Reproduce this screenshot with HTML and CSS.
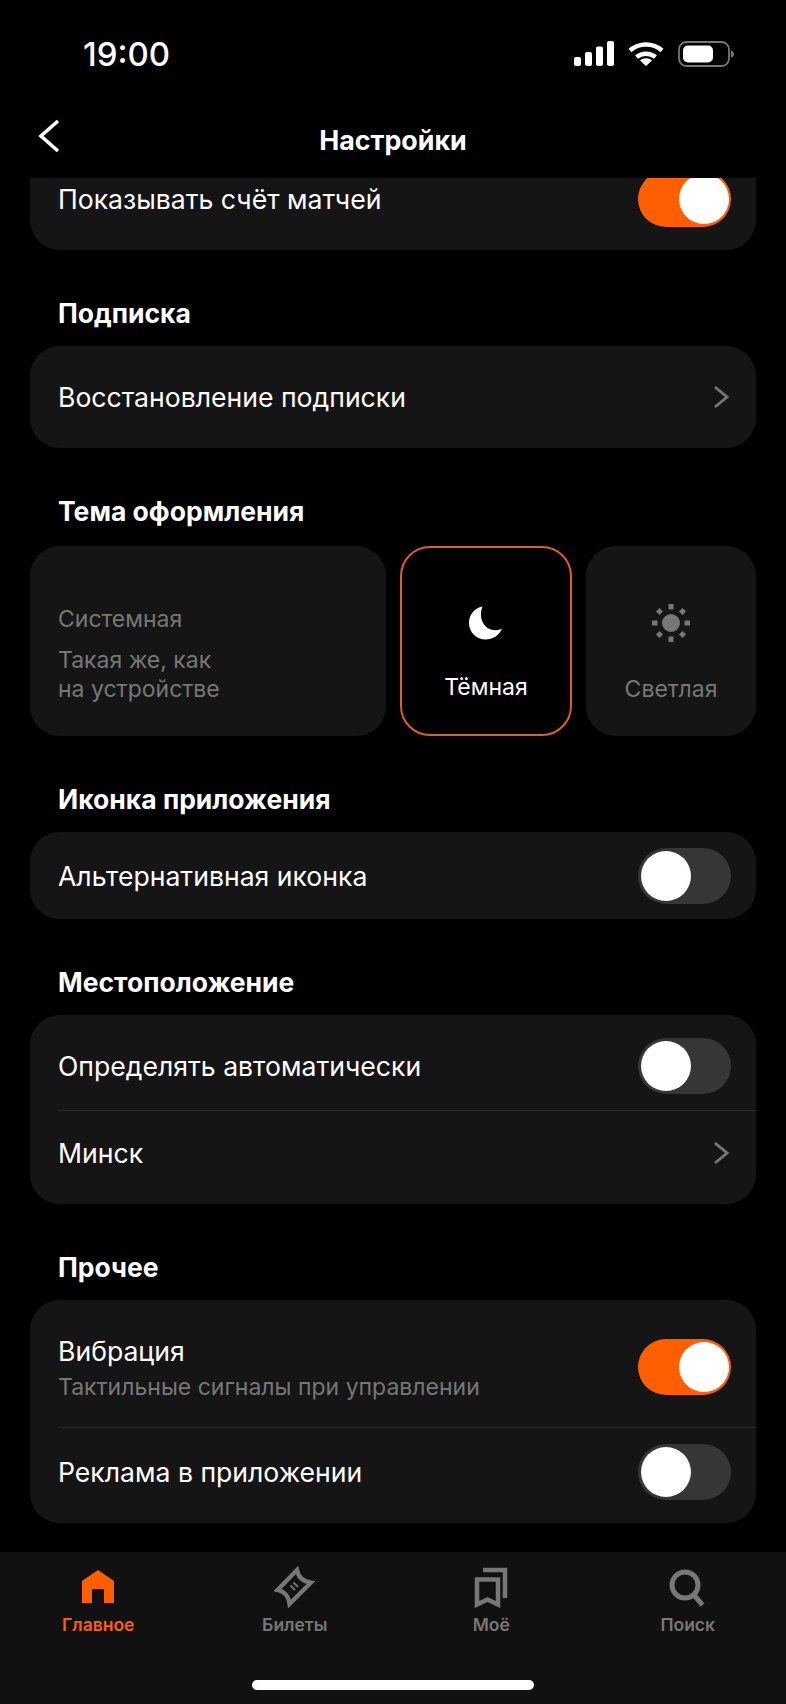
FILE: index.html
```html
<!DOCTYPE html>
<html lang="ru">
<head>
    <meta charset="UTF-8">
    <title>Настройки</title>
    <link rel="stylesheet" href="styles.css">
</head>
<body>
    <div class="phone">
        <div class="status-bar">
            <span class="time">19:00</span>
            <div class="status-icons">
                <svg width="40" height="26" viewBox="0 0 40 26" fill="#fff">
                    <rect x="0" y="16" width="7" height="9" rx="2"/>
                    <rect x="11" y="11" width="7" height="14" rx="2"/>
                    <rect x="22" y="5.500" width="7" height="19.500" rx="2"/>
                    <rect x="33" y="0" width="7" height="25" rx="2"/>
                </svg>
                <svg width="36" height="26" viewBox="0 0 36 26" fill="none" stroke="#fff" stroke-width="4.500">
                    <path d="M2 9.500C11 1.500 25 1.500 34 9.500"/>
                    <path d="M8.500 16C14 11.500 22 11.500 27.500 16"/>
                    <path d="M12 19.500L18 25L24 19.500C21 16.500 15 16.500 12 19.500Z" fill="#fff" stroke="none"/>
                </svg>
                <svg width="56" height="26" viewBox="0 0 56 26" fill="none">
                    <rect x="1" y="1" width="50" height="24" rx="7.500" stroke="#777" stroke-width="1.800"/>
                    <rect x="5" y="4.500" width="30" height="17" rx="5" fill="#fff"/>
                    <path d="M53 9.500C55 10 56 11.500 56 13C56 14.500 55 16 53 16.500Z" fill="#777"/>
                </svg>
            </div>
        </div>
        <div class="nav-bar">
            <svg class="back" width="24" height="36" viewBox="0 0 24 36" fill="none" stroke="#fff" stroke-width="3.600">
                <path d="M21 3L4 18L21 33"/>
            </svg>
            <span class="nav-title">Настройки</span>
        </div>

        <div class="scroll">
            <div class="content">
                <div class="card card-first">
                    <div class="row row-first">
                        <span class="row-text">Показывать счёт матчей</span>
                        <div class="toggle on"><div class="knob"></div></div>
                    </div>
                </div>

                <h2 class="section-title">Подписка</h2>
                <div class="card">
                    <div class="row row-link">
                        <span class="row-text">Восстановление подписки</span>
                        <svg class="chevron" width="16" height="24" viewBox="0 0 16 24" fill="none" stroke="#777" stroke-width="2.800"><path d="M2 2L14 12L2 22"/></svg>
                    </div>
                </div>

                <h2 class="section-title">Тема оформления</h2>
                <div class="theme-row">
                    <div class="theme-card theme-system">
                        <div class="theme-name">Системная</div>
                        <div class="theme-desc">Такая же, как<br>на устройстве</div>
                    </div>
                    <div class="theme-card theme-option selected">
                        <svg width="34" height="34" viewBox="0 0 34 34" fill="#fff">
                            <path d="M13.500 0.500C5.500 2 0 8.500 0 17C0 26.500 7.500 33.500 16.500 33.500C24 33.500 30 29.500 33 22.500C29.500 24.500 24 25 19.500 22.500C12.500 18.500 10 9 13.500 0.500Z"/>
                        </svg>
                        <span class="theme-label">Тёмная</span>
                    </div>
                    <div class="theme-card theme-option">
                        <svg width="38" height="38" viewBox="0 0 38 38" fill="#777">
                            <circle cx="19" cy="19" r="9"/>
                            <rect x="16.500" y="0" width="5" height="5.500"/>
                            <rect x="16.500" y="32.500" width="5" height="5.500"/>
                            <rect x="0" y="16.500" width="5.500" height="5"/>
                            <rect x="32.500" y="16.500" width="5.500" height="5"/>
                            <rect x="5" y="5" width="5" height="5" transform="rotate(45 7.500 7.500)"/>
                            <rect x="28" y="5" width="5" height="5" transform="rotate(45 30.500 7.500)"/>
                            <rect x="5" y="28" width="5" height="5" transform="rotate(45 7.500 30.500)"/>
                            <rect x="28" y="28" width="5" height="5" transform="rotate(45 30.500 30.500)"/>
                        </svg>
                        <span class="theme-label muted">Светлая</span>
                    </div>
                </div>

                <h2 class="section-title">Иконка приложения</h2>
                <div class="card">
                    <div class="row row-single">
                        <span class="row-text">Альтернативная иконка</span>
                        <div class="toggle"><div class="knob"></div></div>
                    </div>
                </div>

                <h2 class="section-title">Местоположение</h2>
                <div class="card">
                    <div class="row row-top">
                        <span class="row-text">Определять автоматически</span>
                        <div class="toggle"><div class="knob"></div></div>
                    </div>
                    <div class="row row-bottom divided">
                        <span class="row-text">Минск</span>
                        <svg class="chevron" width="16" height="24" viewBox="0 0 16 24" fill="none" stroke="#777" stroke-width="2.800"><path d="M2 2L14 12L2 22"/></svg>
                    </div>
                </div>

                <h2 class="section-title">Прочее</h2>
                <div class="card">
                    <div class="row row-vibro">
                        <div class="row-stack">
                            <span class="row-text">Вибрация</span>
                            <span class="row-sub">Тактильные сигналы при управлении</span>
                        </div>
                        <div class="toggle on"><div class="knob"></div></div>
                    </div>
                    <div class="row row-ads divided">
                        <span class="row-text">Реклама в приложении</span>
                        <div class="toggle"><div class="knob"></div></div>
                    </div>
                </div>
            </div>
        </div>

        <div class="tab-bar">
            <div class="tab active">
                <svg width="42" height="42" viewBox="0 0 42 42" fill="#ff5f00">
                    <path d="M21 4L37 15V37H27V23H15V37H5V15Z"/>
                </svg>
                <span>Главное</span>
            </div>
            <div class="tab">
                <svg width="42" height="42" viewBox="0 0 42 42" fill="none" stroke="#777" stroke-width="4.200" stroke-linejoin="miter">
                    <path d="M23 4L3.500 24Q14 26 15.500 38L37 16.500Q25 15 23 4Z"/>
                    <path d="M16.500 19.500L21 24M19.500 16.500L24 21" stroke-width="1.800"/>
                </svg>
                <span>Билеты</span>
            </div>
            <div class="tab">
                <svg width="42" height="42" viewBox="0 0 42 42" fill="none" stroke="#777" stroke-width="4.500">
                    <path d="M13 4H35V32"/>
                    <path d="M7 13.500H28V38.500L17.500 33.500L7 38.500Z"/>
                </svg>
                <span>Моё</span>
            </div>
            <div class="tab">
                <svg width="42" height="42" viewBox="0 0 42 42" fill="none" stroke="#777" stroke-width="5">
                    <circle cx="18" cy="19" r="13"/>
                    <path d="M26.500 28.500L35.500 39"/>
                </svg>
                <span>Поиск</span>
            </div>
            <div class="home-indicator"></div>
        </div>
    </div>
</body>
</html>
```

FILE: styles.css
```css
* {
    box-sizing: border-box;
    font-family: "Inter", "Liberation Sans", sans-serif;
}

body {
    margin: 0;
    background-color: #000;
}

.phone {
    width: 786px;
    height: 1704px;
    display: flex;
    flex-direction: column;
    background-color: #000;
    color: #fff;
    overflow: hidden;
}

.status-bar {
    height: 90px;
    flex: none;
    display: flex;
    justify-content: space-between;
    align-items: flex-start;
    padding: 35px 52px 0 83px;
}

.time {
    font-size: 33px;
    line-height: 38px;
    font-weight: 500;
}

.status-icons {
    display: flex;
    gap: 14px;
    margin-top: 6px;
}

.nav-bar {
    height: 88px;
    flex: none;
    display: flex;
    justify-content: center;
    align-items: center;
    position: relative;
    padding-top: 12px;
}

.back {
    position: absolute;
    left: 37px;
    top: 28px;
}

.nav-title {
    font-size: 26.800px;
    font-weight: 700;
}

.scroll {
    flex: 1;
    overflow: hidden;
}

.content {
    padding: 0 30px;
    margin-top: -30px;
}

.card {
    background-color: #151515;
    border-radius: 30px;
    overflow: hidden;
}

.section-title {
    margin: 48px 0 18px 28px;
    font-size: 26.500px;
    line-height: 30px;
    font-weight: 700;
}

.row {
    display: flex;
    justify-content: space-between;
    align-items: center;
    padding-left: 28px;
    padding-right: 25px;
    position: relative;
}

.row-first {
    height: 102px;
}

.row-link {
    height: 102px;
}

.row-single {
    height: 87px;
}

.row-top {
    height: 95px;
    padding-top: 7px;
}

.row-bottom {
    height: 94px;
    padding-bottom: 8px;
}

.row-vibro {
    height: 127px;
    padding-top: 6px;
}

.row-ads {
    height: 96px;
    padding-bottom: 6px;
}

.divided::before {
    content: "";
    position: absolute;
    left: 28px;
    right: 0;
    top: 0;
    height: 1px;
    background-color: #2a2a2a;
}

.row-text {
    font-size: 26.600px;
    line-height: 30px;
}

.row-stack {
    display: flex;
    flex-direction: column;
    gap: 6px;
    margin-top: 4px;
}

.row-sub {
    font-size: 23px;
    line-height: 30px;
    color: #777;
}

.chevron {
    margin-right: 2px;
}

.toggle {
    width: 93px;
    height: 56px;
    flex: none;
    border-radius: 28px;
    background-color: #363636;
    padding: 3px;
    display: flex;
}

.toggle.on {
    background-color: #ff5f00;
    justify-content: flex-end;
    padding-right: 2px;
}

.knob {
    width: 50px;
    height: 50px;
    border-radius: 50%;
    background-color: #fff;
}

.theme-row {
    display: flex;
    gap: 14px;
    height: 190px;
    margin-top: 20px;
}

.theme-card {
    background-color: #151515;
    border-radius: 30px;
}

.theme-system {
    flex: 1;
    padding: 58px 28px 0;
    color: #777;
}

.theme-name {
    font-size: 23px;
    line-height: 30px;
    margin-bottom: 12px;
}

.theme-desc {
    font-size: 23px;
    line-height: 29px;
}

.theme-option {
    width: 170px;
    display: flex;
    flex-direction: column;
    align-items: center;
    padding-top: 58px;
}

.theme-option.selected {
    width: 172px;
    background-color: #000;
    border: 2px solid #e0601c;
}

.theme-label {
    margin-top: auto;
    margin-bottom: 32px;
    font-size: 23px;
    line-height: 29px;
}

.theme-label.muted {
    color: #777;
}

.tab-bar {
    height: 152px;
    flex: none;
    display: grid;
    grid-template-columns: repeat(4, 1fr);
    align-items: start;
    padding-top: 14px;
    background-color: #111;
    position: relative;
}

.tab {
    display: flex;
    flex-direction: column;
    align-items: center;
    font-size: 17.500px;
    line-height: 22px;
    font-weight: 600;
    color: #777;
}

.tab span {
    margin-top: 6px;
}

.tab.active {
    color: #ff5f00;
}

.home-indicator {
    position: absolute;
    left: 252px;
    top: 128px;
    width: 282px;
    height: 10px;
    border-radius: 5px;
    background-color: #fff;
}
```
